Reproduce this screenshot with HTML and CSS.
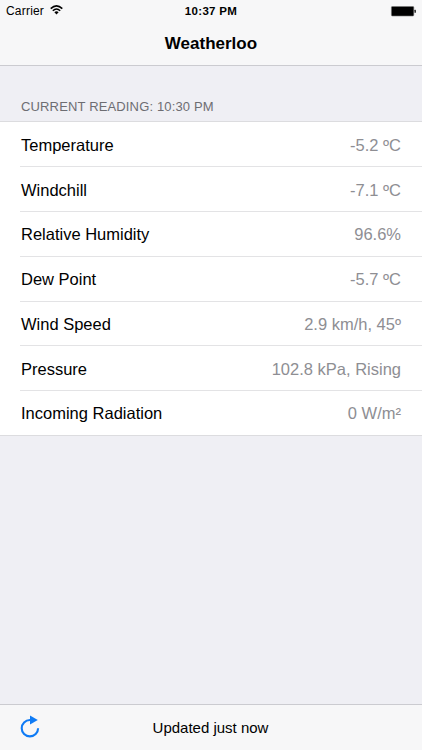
FILE: index.html
```html
<!DOCTYPE html>
<html lang="en">
<head>
    <meta charset="UTF-8">
    <meta name="viewport" content="width=device-width, initial-scale=1.0">
    <title>Weatherloo</title>
    <link rel="stylesheet" href="styles.css">
</head>
<body>

<!-- Status bar and title -->
<header class="header">
    <div class="status-bar">
        <div class="carrier">
            <span>Carrier</span>
            <svg class="wifi" width="13" height="10" viewBox="0 0 13 10">
                <g fill="none" stroke="#000" stroke-width="1.5">
                    <path d="M0.7 3.6 Q6.5 -1.9 12.3 3.6"/>
                    <path d="M2.8 5.8 Q6.5 2.3 10.2 5.8"/>
                </g>
                <path d="M4.4 7.2 Q6.5 5.4 8.6 7.2 L6.5 9.4 Z"/>
            </svg>
        </div>
        <span class="time">10:37 PM</span>
        <svg class="battery" width="26" height="11" viewBox="0 0 26 11">
            <rect x="1.4" y="0.4" width="22.4" height="9.6" rx="1" fill="#000" stroke="#777" stroke-width="0.6"/>
            <rect x="24.4" y="3.7" width="1.6" height="3" rx="0.5" fill="#333"/>
        </svg>
    </div>
    <h1 class="title">Weatherloo</h1>
</header>

<!-- Readings -->
<main class="content">
    <h2 class="section-title">CURRENT READING: 10:30 PM</h2>
    <ul class="readings">
        <li><span class="label">Temperature</span><span class="value">-5.2 ºC</span></li>
        <li><span class="label">Windchill</span><span class="value">-7.1 ºC</span></li>
        <li><span class="label">Relative Humidity</span><span class="value">96.6%</span></li>
        <li><span class="label">Dew Point</span><span class="value">-5.7 ºC</span></li>
        <li><span class="label">Wind Speed</span><span class="value">2.9 km/h, 45º</span></li>
        <li><span class="label">Pressure</span><span class="value">102.8 kPa, Rising</span></li>
        <li><span class="label">Incoming Radiation</span><span class="value">0 W/m²</span></li>
    </ul>
</main>

<!-- Bottom toolbar -->
<footer class="toolbar">
    <button class="refresh-btn" aria-label="Refresh">
        <svg width="20" height="24" viewBox="0 0 20 24">
            <path d="M10.5 5 H9.9 A8.2 8.2 0 1 0 18.1 13.2" fill="none" stroke="#0f7bf5" stroke-width="2.1"/>
            <path d="M10 0.6 L17.8 5.1 L10 9.6 Z" fill="#0f7bf5"/>
        </svg>
    </button>
    <span class="updated">Updated just now</span>
</footer>

</body>
</html>
```
FILE: styles.css
```css
* {
    box-sizing: border-box;
}

body {
    font-family: "Liberation Sans", Helvetica, Arial, sans-serif;
    background-color: #efeff4;
    color: #000;
    margin: 0;
    height: 100vh;
    display: flex;
    flex-direction: column;
    overflow: hidden;
}

.header {
    height: 66px;
    background-color: #f7f7f8;
    border-bottom: 1px solid #cbcbd0;
}

.status-bar {
    display: grid;
    grid-template-columns: 1fr auto 1fr;
    align-items: center;
    height: 22px;
    padding: 0 6px 0 6px;
    font-size: 12px;
}

.carrier {
    display: flex;
    align-items: center;
    gap: 6px;
    letter-spacing: 0.2px;
}

.wifi {
    margin-top: -2px;
}

.time {
    font-weight: bold;
    font-size: 11.5px;
    letter-spacing: 0.3px;
}

.battery {
    justify-self: end;
}

.title {
    margin: 0;
    font-size: 17px;
    line-height: 43px;
    text-align: center;
}

.content {
    flex: 1;
}

.section-title {
    margin: 0;
    height: 55px;
    padding: 33px 21px 0;
    font-size: 13px;
    font-weight: normal;
    line-height: 16px;
    letter-spacing: 0.15px;
    color: #6d6d72;
}

/* Readings table */
.readings {
    list-style: none;
    margin: 0;
    padding: 0 0 0 20px;
    background-color: #fff;
    border-top: 1px solid #dcdcdf;
    border-bottom: 1px solid #dcdcdf;
    font-size: 16.5px;
}

.readings li {
    display: flex;
    justify-content: space-between;
    align-items: center;
    height: 44.75px;
    padding: 2px 21px 0 1px;
}

.readings li:first-child {
    height: 44.25px;
}

.readings li + li {
    border-top: 1px solid #e3e3e5;
}

.value {
    color: #8e8e93;
}

/* Toolbar */
.toolbar {
    display: grid;
    grid-template-columns: 1fr auto 1fr;
    align-items: center;
    height: 46px;
    padding: 0 21px 0 20px;
    background-color: #f7f7f8;
    border-top: 1px solid #cbcbd0;
}

.refresh-btn {
    display: flex;
    justify-self: start;
    margin-top: -1px;
    padding: 0;
    background: none;
    border: none;
    cursor: pointer;
}

.updated {
    font-size: 15px;
}
```
